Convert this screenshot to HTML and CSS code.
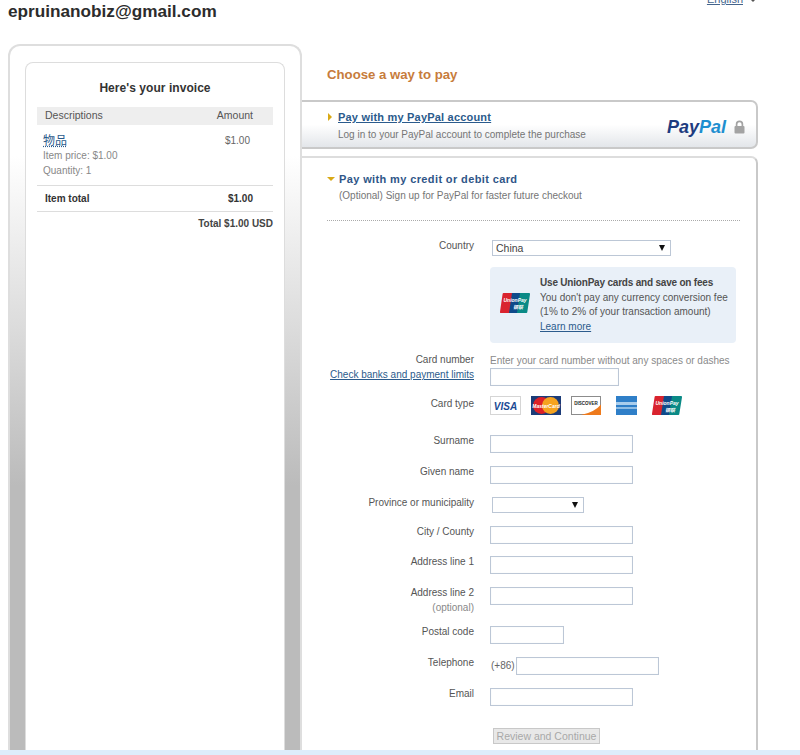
FILE: index.html
```html
<!DOCTYPE html>
<html lang="en">
<head>
<meta charset="utf-8">
<title>Choose a way to pay</title>
<link rel="stylesheet" href="styles.css">
</head>
<body>
<div class="page">
  <header class="top">
    <h1 class="merchant">epruinanobiz@gmail.com</h1>
    <a class="lang" href="#">English</a><span class="lang-arrow"></span>
  </header>
  <main class="columns">
    <aside class="side">
      <section class="invoice">
        <h2 class="invoice-title">Here's your invoice</h2>
        <div class="inv-head"><span>Descriptions</span><span>Amount</span></div>
        <div class="inv-item">
          <div class="inv-desc">
            <a class="inv-name" href="#">物品</a>
            <div>Item price: $1.00</div>
            <div>Quantity: 1</div>
          </div>
          <div class="inv-price">$1.00</div>
        </div>
        <div class="inv-total"><span>Item total</span><span>$1.00</span></div>
        <div class="inv-grand">Total $1.00 USD</div>
      </section>
    </aside>
    <div class="content">
      <h2 class="choose">Choose a way to pay</h2>
      <section class="pay-login">
        <div class="pay-login-text">
          <div class="pay-title-row"><span class="arrow-right"></span><a class="pay-link" href="#">Pay with my PayPal account</a></div>
          <p class="pay-sub pay-sub-login">Log in to your PayPal account to complete the purchase</p>
        </div>
        <div class="pp-brand">
          <span class="pp-logo"><span class="pp-dark">Pay</span><span class="pp-light">Pal</span></span>
          <svg class="lock" width="11" height="14" viewBox="0 0 11 14"><path d="M2.6 6V4.2a2.9 2.9 0 0 1 5.8 0V6" fill="none" stroke="#a3a3a3" stroke-width="1.7"/><rect x="0.5" y="6" width="10" height="7.5" rx="1" fill="#a3a3a3"/></svg>
        </div>
      </section>
      <section class="pay-card">
        <div class="pay-title-row"><span class="arrow-down"></span><h3 class="card-title">Pay with my credit or debit card</h3></div>
        <p class="pay-sub pay-sub-card">(Optional) Sign up for PayPal for faster future checkout</p>
        <div class="dots"></div>
        <form class="form">
          <div class="row row-country">
            <label class="lbl">Country</label>
            <div class="select select-country"><select><option>China</option></select></div>
          </div>
          <div class="row row-info">
            <div></div>
            <div class="info">
              <svg class="up" width="30" height="20" viewBox="0 0 30 20"><path d="M3.5 0H13L10 20H1a1 1 0 0 1-1-1.2L2.6.9A1 1 0 0 1 3.5 0Z" fill="#d9232e"/><path d="M12 0h9l-3 20H9Z" fill="#0f4a8a"/><path d="M20 0h9a1 1 0 0 1 1 1.2L27.3 19a1 1 0 0 1-1 1H17Z" fill="#0a8a86"/><text class="up-text" x="15" y="9" text-anchor="middle">UnionPay</text><text class="up-text" x="18" y="16" text-anchor="middle">银联</text></svg>
              <div class="info-text">
                <strong>Use UnionPay cards and save on fees</strong>
                <div>You don't pay any currency conversion fee</div>
                <div>(1% to 2% of your transaction amount)</div>
                <a href="#">Learn more</a>
              </div>
            </div>
          </div>
          <div class="row row-number">
            <div class="lbl lbl-stack"><label>Card number</label><a href="#">Check banks and payment limits</a></div>
            <div class="stack">
              <div class="hint">Enter your card number without any spaces or dashes</div>
              <input class="in w129" type="text">
            </div>
          </div>
          <div class="row row-types">
            <label class="lbl">Card type</label>
            <div class="cards">
              <svg width="31" height="19" viewBox="0 0 31 19"><rect x=".5" y=".5" width="30" height="18" fill="#fff" stroke="#d5d5d5"/><text class="visa" x="15.5" y="14" text-anchor="middle">VISA</text></svg>
              <svg width="30" height="19" viewBox="0 0 30 19"><rect width="30" height="19" fill="#1c3c78"/><circle cx="10.5" cy="9.5" r="8.5" fill="#dd2027"/><circle cx="19.5" cy="9.5" r="8.5" fill="#f5a31f"/><text class="mc" x="15" y="11.5" text-anchor="middle">MasterCard</text></svg>
              <svg width="30" height="19" viewBox="0 0 30 19"><rect x=".5" y=".5" width="29" height="18" fill="#fff" stroke="#8c8c8c"/><path d="M30 8.500V19H10Q24 16 30 8.500Z" fill="#ee7a1c"/><text class="disc" x="15" y="9" text-anchor="middle">DISCOVER</text></svg>
              <svg class="amex" width="21" height="19" viewBox="0 0 21 19"><rect width="21" height="19" fill="#2f7fc8"/><rect y="6" width="21" height="3" fill="#a9cdec"/><rect y="11" width="21" height="2" fill="#8fbde4"/></svg>
              <svg width="30" height="19" viewBox="0 0 30 19"><path d="M3.500 0H13L10 19H1a1 1 0 0 1-1-1.200L2.600.9A1 1 0 0 1 3.500 0Z" fill="#d9232e"/><path d="M12 0h9l-3 19H9Z" fill="#0f4a8a"/><path d="M20 0h9a1 1 0 0 1 1 1.200L27.300 18a1 1 0 0 1-1 1H17Z" fill="#0a8a86"/><text class="up-text" x="15" y="8.500" text-anchor="middle">UnionPay</text><text class="up-text" x="18" y="15.500" text-anchor="middle">银联</text></svg>
            </div>
          </div>
          <div class="row"><label class="lbl">Surname</label><input class="in w143" type="text"></div>
          <div class="row"><label class="lbl">Given name</label><input class="in w143" type="text"></div>
          <div class="row"><label class="lbl">Province or municipality</label><div class="select select-prov"><select><option></option></select></div></div>
          <div class="row row-city"><label class="lbl">City / County</label><input class="in w143" type="text"></div>
          <div class="row"><label class="lbl">Address line 1</label><input class="in w143" type="text"></div>
          <div class="row row-addr2"><div class="lbl lbl-addr">Address line 2<span class="opt">(optional)</span></div><input class="in w143" type="text"></div>
          <div class="row"><label class="lbl">Postal code</label><input class="in w74" type="text"></div>
          <div class="row"><label class="lbl">Telephone</label><div class="tel"><span>(+86)</span><input class="in w143" type="text"></div></div>
          <div class="row"><label class="lbl">Email</label><input class="in w143" type="text"></div>
          <div class="row row-btn"><div></div><button class="btn" type="button" disabled>Review and Continue</button></div>
        </form>
      </section>
    </div>
  </main>
  <div class="band"></div>
</div>
</body>
</html>
```
FILE: styles.css
```css
* { box-sizing: border-box; }
html, body { margin: 0; padding: 0; }
body { background: #fff; color: #6f6f6f; font: 10px/14px "Liberation Sans", Arial, "Noto Sans CJK SC", sans-serif; }
.page { width: 800px; height: 755px; overflow: hidden; display: flex; flex-direction: column; }
a { color: #2b5b8c; }

.top { flex: 0 0 44px; display: flex; align-items: flex-start; padding: 0 0 0 8px; }
.merchant { margin: 0; font-size: 17.2px; line-height: 22px; font-weight: bold; color: #2c2c2c; flex: 1; }
.lang { font-size: 11px; line-height: 14px; margin-top: -8px; margin-right: 8px; color: #44648c; }
.lang-arrow { width: 0; height: 0; margin: 0 45px 0 0; border: 2px solid transparent; border-top-color: #555; }

.columns { flex: 0 0 706px; min-height: 0; display: flex; align-items: stretch; }
.side { width: 294px; margin-left: 8px; padding: 16px 15px 0; border: 2px solid #dedede; border-bottom: 0; border-radius: 12px 12px 0 0; background: linear-gradient(#fff 0, #fff 110px, #bbb 440px, #bbb 100%); }
.invoice { height: 100%; background: #fff; border: 1px solid #ddd; border-bottom: 0; border-radius: 8px 8px 0 0; padding: 17px 11px 0; }
.invoice-title { margin: 0 0 11px; font-size: 12px; line-height: 16px; font-weight: bold; color: #333; text-align: center; letter-spacing: .05px; }
.inv-head { display: flex; justify-content: space-between; height: 18px; padding: 0 20px 0 8px; background: #eee; font-size: 10.5px; line-height: 17px; color: #555; }
.inv-item { display: flex; justify-content: space-between; padding: 9px 23px 7px 6px; border-bottom: 1px solid #ddd; height: 61px; }
.inv-desc { line-height: 15px; color: #888; }
.inv-name { display: block; font-size: 12px; color: #2b5b8c; text-decoration: underline dotted; line-height: 14px; }
.inv-price { color: #666; }
.inv-total { display: flex; justify-content: space-between; height: 26px; padding: 6px 20px 0 8px; border-bottom: 1px solid #ddd; font-weight: bold; color: #333; }
.inv-grand { padding-top: 5px; text-align: right; font-weight: bold; color: #444; }

.content { width: 456px; min-height: 0; display: flex; flex-direction: column; }
.choose { margin: 23px 0 0 25px; height: 33px; font-size: 13.200px; line-height: 16px; font-weight: bold; color: #c77c3c; }
.pay-login { height: 49px; display: flex; justify-content: space-between; border: 2px solid #c9c9c9; border-left: 0; border-radius: 0 7px 7px 0; background: linear-gradient(#fff 0, #fff 50%, #e3e6ea 100%); padding: 7px 11px 0 26px; }
.pay-title-row { display: flex; align-items: center; height: 16px; }
.arrow-right { width: 0; height: 0; border: 4px solid transparent; border-left: 4px solid #d9a916; border-right: 0; margin-right: 6px; }
.arrow-down { width: 0; height: 0; border: 4px solid transparent; border-top: 4px solid #d9a916; border-bottom: 0; margin-right: 4px; }
.pay-link { font-size: 11px; font-weight: bold; color: #2b5b8c; letter-spacing: .2px; }
.pay-sub { margin: 2px 0 0 10px; line-height: 14px; color: #757575; }
.pay-sub-login { margin-top: 3px; }
.pay-sub-card { margin-left: 12px; }
.pp-brand { display: flex; align-items: center; gap: 8px; margin-top: 10px; height: 16px; }
.pp-logo { font-size: 18px; line-height: 18px; font-weight: bold; font-style: italic; }
.pp-dark { color: #1f3c80; }
.pp-light { color: #1f8fd0; }
.lock { display: block; }

.pay-card { margin-top: 7px; flex: 1; min-height: 0; overflow: hidden; border: 2px solid #c9c9c9; border-left: 0; border-bottom: 0; border-top-color: #ddd; border-radius: 0 7px 0 0; padding: 13px 16px 0 25px; }
.card-title { margin: 0; font-size: 11px; line-height: 16px; font-weight: bold; color: #2f5688; letter-spacing: .38px; }
.dots { margin-top: 17px; border-top: 1px dotted #aaa; }

.form { display: flex; flex-direction: column; gap: 13px; margin-top: 19px; }
.row { display: grid; grid-template-columns: 147px 1fr; column-gap: 16px; align-items: start; }
.lbl { text-align: right; color: #555; line-height: 14px; margin-top: -1px; }
.lbl-stack { display: flex; flex-direction: column; gap: 1px; margin-top: -4px; }
.lbl-stack a { white-space: nowrap; }
.lbl-addr { display: flex; flex-direction: column; }
.opt { color: #888; margin-top: 1px; }
.row-country { margin-bottom: -2px; }
.row-info { margin-bottom: 1px; }
.row-types { margin-bottom: 7px; margin-top: -3px; }
.row-types .lbl { margin-top: 1px; }
.row-city { margin-bottom: -1px; }
.row-addr2 { height: 26px; }
.row-btn { margin-top: 9px; }

.in { display: block; height: 18px; padding: 0 3px; background: #fff; border: 1px solid #bcc7d6; box-shadow: inset 0 0 1px #dfe4ea; border-radius: 0; }
.w129 { width: 129px; }
.w143 { width: 143px; }
.w74 { width: 74px; }

.select { position: relative; margin-left: 2px; }
.select select { display: block; width: 100%; height: 16px; border: 1px solid #bcc7d6; background: #fff; padding: 0 3px; appearance: none; -webkit-appearance: none; font: 10.5px "Liberation Sans", Arial, sans-serif; color: #444; border-radius: 0; }
.select::after { content: ""; position: absolute; right: 6px; top: 5px; border: 3px solid transparent; border-top: 6px solid #111; border-bottom: 0; }
.select-country { width: 179px; }
.select-prov { width: 92px; }

.info { width: 246px; height: 76px; display: flex; background: #e9f0f8; border-radius: 4px; padding: 9px 4px 0 10px; }
.up { flex: none; margin-top: 17px; margin-right: 10px; }
.info-text { line-height: 14.500px; color: #555; white-space: nowrap; }
.info-text strong { color: #444; letter-spacing: -.2px; }
.up-text { font: bold 5px "Liberation Sans", "Noto Sans CJK SC", sans-serif; fill: #fff; font-style: italic; }

.stack { display: flex; flex-direction: column; gap: 2px; margin-top: -2px; }
.hint { color: #8a8a8a; line-height: 11px; white-space: nowrap; }

.cards { display: flex; align-items: center; gap: 10px; }
.cards svg { display: block; flex: none; }
.cards .amex { margin-left: 5px; margin-right: 5px; }
.visa { font: italic bold 10px "Liberation Sans", sans-serif; fill: #1a4a94; }
.mc { font: italic bold 5px "Liberation Sans", sans-serif; fill: #fff; }
.disc { font: bold 4.500px "Liberation Sans", sans-serif; fill: #222; }

.tel { display: flex; align-items: center; gap: 1px; margin-left: 1px; color: #666; }

.btn { margin-left: 3px; width: 107px; height: 16px; padding: 0; background: #e8e8e8; border: 1px solid #c8c8c8; color: #a8a8a8; font: 10.5px/14px "Liberation Sans", Arial, sans-serif; }

.band { flex: 0 0 5px; background: #deedfb; }
```
